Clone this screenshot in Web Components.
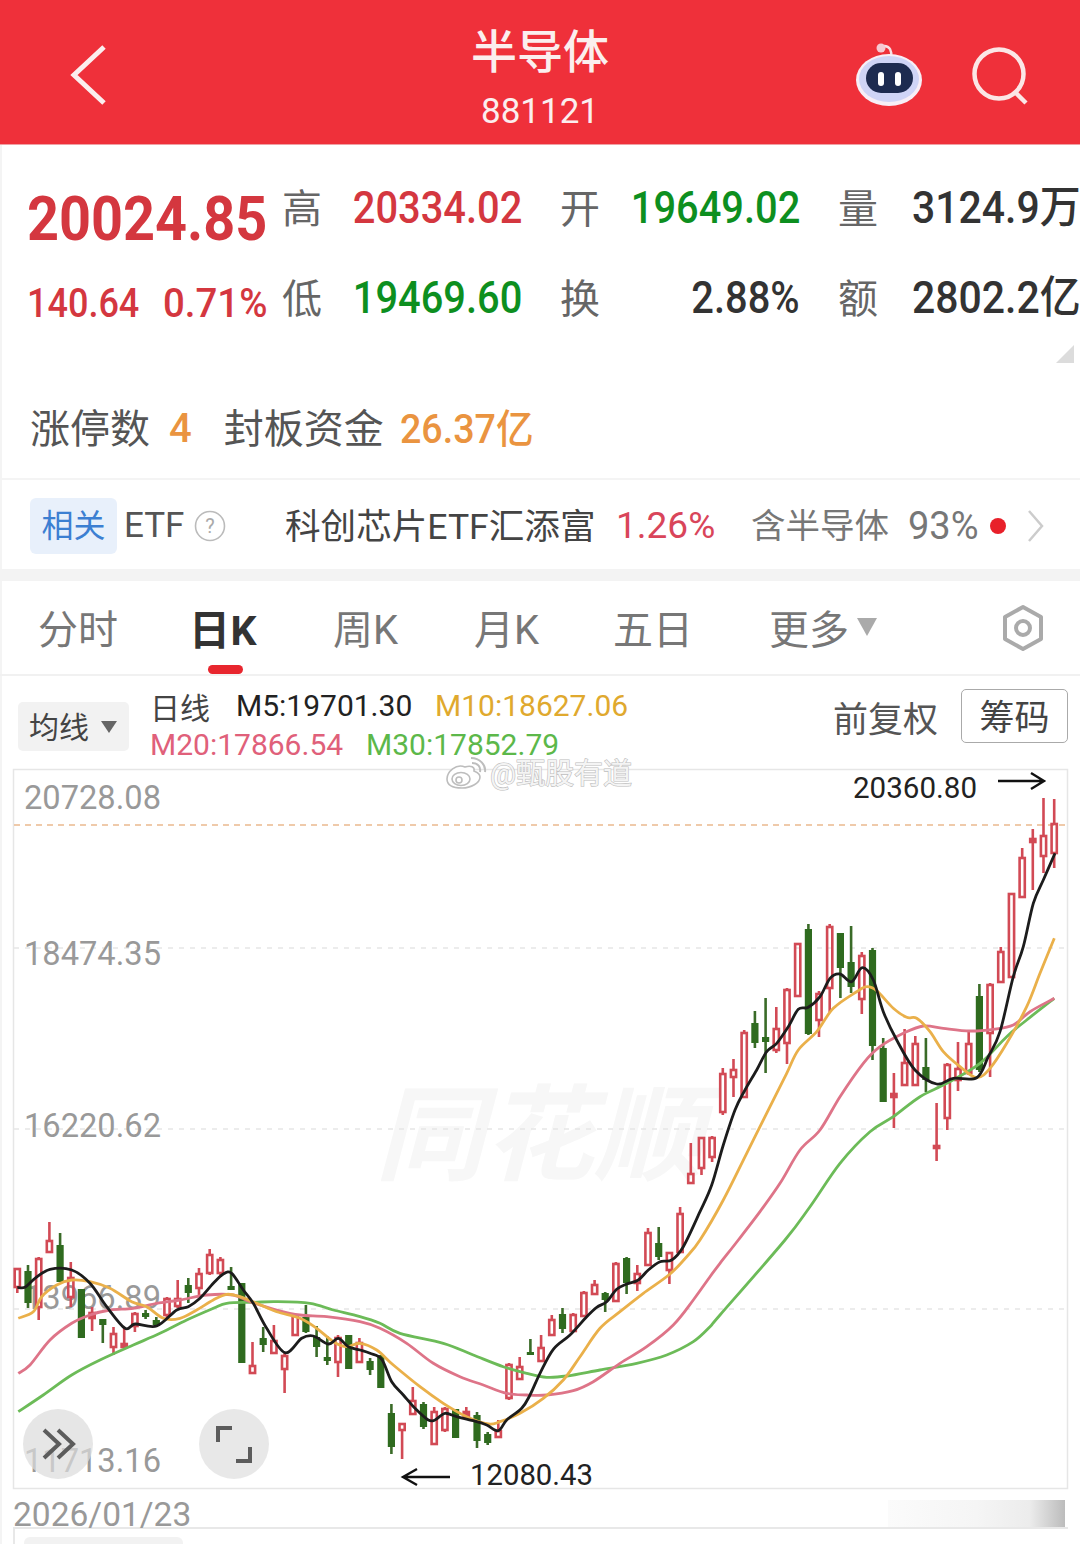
<!DOCTYPE html>
<html lang="zh">
<head>
<meta charset="utf-8">
<title>半导体</title>
<style>
    html, body { margin: 0; background: #fff; }
    body { width: 1080px; height: 1544px; overflow: hidden; font-family: Roboto, "Noto Sans CJK SC", sans-serif; box-shadow: inset 2px 0 #f4f4f4; }
</style>
</head>
<body>
<app-header></app-header>
<quote-stats></quote-stats>
<limit-row></limit-row>
<etf-row></etf-row>
<tab-bar></tab-bar>
<ma-legend></ma-legend>
<kline-chart></kline-chart>
<chart-footer></chart-footer>

<script>
const CJK = `Roboto, "Noto Sans CJK SC", sans-serif`;

class AppHeader extends HTMLElement {
    constructor() {
        super();
        this.attachShadow({ mode: 'open' });
        this.shadowRoot.innerHTML = `
            <style>
                :host {
                    display: grid;
                    grid-template-columns: 1fr auto 1fr;
                    align-items: center;
                    height: 145px;
                    background: #ef303a;
                    color: #fff;
                    font-family: ${CJK};
                    box-sizing: border-box;
                    border-bottom: 1px solid #f0a0a4;
                }
                .back { display: block; margin-left: 70px; width: 38px; height: 62px; margin-top: 6px; }
                .title { display: flex; flex-direction: column; align-items: center; }
                .name { font-size: 46px; font-weight: 500; line-height: 52px; margin-top: 14px; color: #fbeeee; }
                .code { font-size: 35px; line-height: 40px; margin-top: 14px; color: #fbeeee; }
                .tools { display: flex; justify-content: flex-end; align-items: center; }
                .robot { width: 72px; height: 66px; margin-right: 46px; margin-top: 2px; }
                .search { width: 60px; height: 60px; margin-right: 49px; margin-top: 10px; }
            </style>
            <svg class="back" viewBox="0 0 38 62"><path d="M34 3 L4 31 L34 59" fill="none" stroke="#fbeeee" stroke-width="5"/></svg>
            <div class="title">
                <div class="name">半导体</div>
                <div class="code">881121</div>
            </div>
            <div class="tools">
                <svg class="robot" viewBox="0 0 72 66">
                    <path d="M31 6 C37 6 39 11 38 17" fill="none" stroke="#f8dfe4" stroke-width="2.5"/>
                    <circle cx="28" cy="8" r="4.5" fill="#f6c9d2"/>
                    <ellipse cx="36" cy="40" rx="33" ry="26" fill="#f7eef6"/>
                    <ellipse cx="36" cy="39" rx="30" ry="23" fill="#cfd4f6"/>
                    <rect x="13" y="23" width="47" height="30" rx="15" fill="#1d2b50"/>
                    <rect x="25" y="32" width="6" height="14" rx="3" fill="#fff"/>
                    <rect x="42" y="32" width="6" height="14" rx="3" fill="#fff"/>
                </svg>
                <svg class="search" viewBox="0 0 60 60">
                    <circle cx="28" cy="27" r="24.5" fill="none" stroke="#fbe6e6" stroke-width="4.5"/>
                    <path d="M44 45 L55 56" stroke="#fbe6e6" stroke-width="4.5" fill="none"/>
                </svg>
            </div>
        `;
    }
}

class QuoteStats extends HTMLElement {
    constructor() {
        super();
        this.attachShadow({ mode: 'open' });
        this.shadowRoot.innerHTML = `
            <style>
                :host {
                    display: block;
                    position: relative;
                    height: 225px;
                    box-sizing: border-box;
                    padding: 18px 0 0 27px;
                    font-family: ${CJK};
                }
                .grid {
                    display: grid;
                    grid-template-columns: 255px 72px 206px 74px 204px 74px 168px;
                    grid-auto-rows: 90px;
                    align-items: center;
                    white-space: nowrap;
                }
                .lb { font-size: 40px; color: #666; margin-top: -5px; }
                .v { font-size: 44px; font-weight: 500; display: block; line-height: 50px; }
                .l { transform: scaleX(.93); transform-origin: left center; }
                .r { justify-self: end; transform: scaleX(.905); transform-origin: right center; margin-right: 38px; }
                .red { color: #d4373f; }
                .green { color: #0d8f1f; }
                .dark { color: #333; }
                .price { font-size: 62px; font-weight: 700; color: #d4373f; padding-top: 22px; line-height: 60px; transform: scaleX(.9); transform-origin: left center; display: block; }
                .sub { display: flex; gap: 25px; padding-top: 10px; font-size: 40px; font-weight: 500; color: #d4373f; }
                .sub span { display: block; transform: scaleX(.9); transform-origin: left center; width: 111px; }
                .sub span + span { transform: scaleX(.96); }
                .corner {
                    position: absolute;
                    right: 6px;
                    bottom: 7px;
                    width: 0;
                    height: 0;
                    border-left: 18px solid transparent;
                    border-bottom: 18px solid #dcdcdc;
                }
            </style>
            <div class="grid">
                <div class="price">20024.85</div>
                <div class="lb">高</div>
                <div class="v r red">20334.02</div>
                <div class="lb">开</div>
                <div class="v r green">19649.02</div>
                <div class="lb">量</div>
                <div class="v l dark">3124.9万</div>

                <div class="sub"><span>140.64</span><span>0.71%</span></div>
                <div class="lb">低</div>
                <div class="v r green">19469.60</div>
                <div class="lb">换</div>
                <div class="v r dark">2.88%</div>
                <div class="lb">额</div>
                <div class="v l dark">2802.2亿</div>
            </div>
            <div class="corner"></div>
        `;
    }
}

class LimitRow extends HTMLElement {
    constructor() {
        super();
        this.attachShadow({ mode: 'open' });
        this.shadowRoot.innerHTML = `
            <style>
                :host {
                    display: flex;
                    align-items: center;
                    height: 110px;
                    box-sizing: border-box;
                    padding: 3px 0 0 30px;
                    font-family: ${CJK};
                    font-size: 40px;
                    color: #555;
                    border-bottom: 2px solid #f4f4f4;
                }
                .o { color: #ea9440; font-weight: 500; }
                .four { margin: 5px 32px 0 19px; }
                .cap { margin-left: 16px; display: inline-block; transform: scaleX(.94); transform-origin: left center; white-space: nowrap; }
            </style>
            <span>涨停数</span>
            <span class="o four">4</span>
            <span>封板资金</span>
            <span class="o cap">26.37亿</span>
        `;
    }
}

class EtfRow extends HTMLElement {
    constructor() {
        super();
        this.attachShadow({ mode: 'open' });
        this.shadowRoot.innerHTML = `
            <style>
                :host {
                    display: flex;
                    align-items: center;
                    height: 101px;
                    box-sizing: border-box;
                    padding: 2px 0 0 30px;
                    font-family: ${CJK};
                    font-size: 34px;
                    color: #555;
                    white-space: nowrap;
                    border-bottom: 12px solid #f3f3f3;
                }
                .tag {
                    width: 87px;
                    height: 56px;
                    box-sizing: border-box;
                    padding-bottom: 5px;
                    border-radius: 6px;
                    background: #e8f0fb;
                    color: #3c7fd2;
                    font-size: 32px;
                    display: flex;
                    align-items: center;
                    justify-content: center;
                }
                .etf { margin-left: 7px; width: 70px; font-size: 35px; }
                .help { width: 32px; height: 32px; margin-right: 59px; }
                .name { color: #444; width: 331px; font-size: 35.6px; margin-top: -5px; }
                .pct { color: #d9455a; width: 135px; font-size: 37px; }
                .hold { color: #777; width: 157px; font-size: 34.5px; margin-top: -5px; }
                .share { color: #777; width: 82px; font-size: 38px; }
                .dot { width: 16px; height: 16px; border-radius: 50%; background: #e8202a; margin-right: 21px; }
                .chev { width: 18px; height: 34px; }
            </style>
            <div class="tag">相关</div>
            <div class="etf">ETF</div>
            <svg class="help" viewBox="0 0 32 32">
                <circle cx="16" cy="16" r="14.5" fill="none" stroke="#bbb" stroke-width="1.6"/>
                <text x="16" y="23" text-anchor="middle" font-size="20" fill="#aaa" font-family="Roboto, sans-serif">?</text>
            </svg>
            <div class="name">科创芯片ETF汇添富</div>
            <div class="pct">1.26%</div>
            <div class="hold">含半导体</div>
            <div class="share">93%</div>
            <div class="dot"></div>
            <svg class="chev" viewBox="0 0 18 34"><path d="M2 2 L15 17 L2 32" fill="none" stroke="#ccc" stroke-width="2.5"/></svg>
        `;
    }
}

class TabBar extends HTMLElement {
    constructor() {
        super();
        this.attachShadow({ mode: 'open' });
        this.shadowRoot.innerHTML = `
            <style>
                :host {
                    display: block;
                    position: relative;
                    height: 95px;
                    box-sizing: border-box;
                    border-bottom: 2px solid #f1f1f1;
                    font-family: ${CJK};
                }
                .tabs {
                    display: grid;
                    grid-template-columns: 155px 140px 141px 139px 156px 233px 43px;
                    align-items: center;
                    height: 93px;
                    padding-left: 38px;
                    font-size: 40px;
                    color: #777;
                    white-space: nowrap;
                }
                .tabs > div { margin-top: -2px; }
                .tabs > .on { color: #333; font-weight: 700; font-size: 41px; margin-left: -4px; letter-spacing: .5px; }
                .more { display: flex; align-items: center; gap: 8px; }
                .more i { width: 0; height: 0; border-left: 10px solid transparent; border-right: 10px solid transparent; border-top: 18px solid #aaa; }
                .gear { width: 44px; height: 48px; margin-left: -1px; margin-top: 0; }
                .bar {
                    position: absolute;
                    left: 208px;
                    bottom: 0;
                    width: 35px;
                    height: 9px;
                    border-radius: 5px;
                    background: #e8262e;
                }
            </style>
            <div class="tabs">
                <div>分时</div>
                <div class="on">日K</div>
                <div>周K</div>
                <div>月K</div>
                <div>五日</div>
                <div class="more">更多<i></i></div>
                <svg class="gear" viewBox="0 0 44 48">
                    <path d="M22 3 L40 13 L40 35 L22 45 L4 35 L4 13 Z" fill="none" stroke="#aaa" stroke-width="4" stroke-linejoin="round"/>
                    <circle cx="22" cy="24" r="7" fill="none" stroke="#aaa" stroke-width="4"/>
                </svg>
            </div>
            <div class="bar"></div>
        `;
    }
}

class MaLegend extends HTMLElement {
    constructor() {
        super();
        this.attachShadow({ mode: 'open' });
        this.shadowRoot.innerHTML = `
            <style>
                :host {
                    display: flex;
                    height: 93px;
                    box-sizing: border-box;
                    padding: 13px 12px 0 18px;
                    font-family: ${CJK};
                    white-space: nowrap;
                }
                .pill {
                    width: 111px;
                    height: 49px;
                    margin-top: 13px;
                    border-radius: 5px;
                    background: #f2f2f2;
                    display: flex;
                    align-items: center;
                    padding: 0 0 3px 11px;
                    box-sizing: border-box;
                    font-size: 30px;
                    color: #444;
                }
                .pill i { margin: 3px 0 0 12px; width: 0; height: 0; border-left: 8px solid transparent; border-right: 8px solid transparent; border-top: 12px solid #666; }
                .ma { margin-left: 21px; margin-top: -3px; display: flex; flex-direction: column; }
                .row { display: flex; height: 39px; align-items: center; font-size: 30px; }
                .row span { display: block; }
                .t { color: #444; width: 86px; }
                .m5 { color: #222; width: 199px; }
                .m10 { color: #e0a92e; }
                .m20 { color: #e0607a; width: 216px; }
                .m30 { color: #5cb84a; }
                .right { margin-left: auto; display: flex; align-items: flex-start; }
                .fq { font-size: 35px; color: #555; margin: 12px 23px 0 0; line-height: 40px; }
                .chip {
                    width: 107px;
                    height: 54px;
                    box-sizing: border-box;
                    padding-bottom: 4px;
                    border: 1px solid #aaa;
                    border-radius: 5px;
                    font-size: 35px;
                    color: #444;
                    display: flex;
                    align-items: center;
                    justify-content: center;
                }
            </style>
            <div class="pill">均线<i></i></div>
            <div class="ma">
                <div class="row"><span class="t">日线</span><span class="m5">M5:19701.30</span><span class="m10">M10:18627.06</span></div>
                <div class="row"><span class="m20">M20:17866.54</span><span class="m30">M30:17852.79</span></div>
            </div>
            <div class="right">
                <div class="fq">前复权</div>
                <div class="chip">筹码</div>
            </div>
        `;
    }
}

// [wick top, body top, body bottom, wick bottom], in page px; last flag: g = green
const CANDLES = [
    [1268,1268,1287,1293],[1265,1271,1303,1308,'g'],[1257,1258,1307,1320],[1222,1240,1252,1252],[1233,1245,1282,1282,'g'],
    [1262,1277,1297,1307],[1289,1289,1338,1338,'g'],[1307,1312,1318,1331],[1319,1319,1325,1343,'g'],[1327,1333,1347,1355],
    [1328,1343,1347,1348],[1312,1313,1326,1332],[1310,1313,1317,1319,'g'],[1317,1320,1325,1326,'g'],[1297,1298,1315,1318],
    [1280,1298,1306,1308],[1278,1285,1293,1303,'g'],[1268,1273,1288,1295],[1249,1254,1273,1275],[1257,1259,1273,1275],
    [1267,1286,1290,1290,'g'],[1283,1283,1363,1363,'g'],[1342,1365,1373,1373],[1327,1338,1345,1352,'g'],[1325,1340,1353,1353],
    [1353,1355,1369,1393],[1315,1315,1335,1335],[1305,1317,1332,1333,'g'],[1326,1337,1347,1357,'g'],[1336,1357,1361,1365,'g'],
    [1335,1337,1362,1377],[1335,1335,1369,1369,'g'],[1338,1342,1362,1363],[1358,1361,1370,1375,'g'],[1355,1355,1388,1388,'g'],
    [1404,1413,1447,1454,'g'],[1423,1423,1430,1459],[1387,1400,1414,1415],[1402,1404,1427,1429,'g'],[1407,1411,1444,1445],
    [1407,1408,1430,1432],[1409,1409,1438,1438,'g'],[1407,1411,1417,1420],[1412,1415,1441,1448,'g'],[1432,1434,1443,1445,'g'],
    [1420,1430,1437,1438],[1363,1364,1398,1400],[1357,1366,1379,1380],[1339,1352,1353,1353,'g'],[1335,1347,1361,1362],
    [1315,1319,1335,1335],[1308,1314,1329,1333,'g'],[1313,1314,1331,1332],[1291,1292,1316,1317],[1280,1284,1294,1295],
    [1292,1293,1300,1312,'g'],[1262,1263,1301,1302],[1257,1258,1283,1294,'g'],[1265,1273,1283,1291],[1228,1232,1265,1265],
    [1227,1243,1257,1260,'g'],[1252,1252,1270,1284],[1207,1213,1252,1253],[1143,1173,1183,1183],[1137,1137,1168,1175],
    [1136,1137,1157,1162],[1068,1073,1112,1115],[1059,1069,1077,1097],[1030,1032,1097,1097],[1011,1023,1043,1048,'g'],
    [998,1037,1042,1073,'g'],[1007,1028,1050,1053],[988,989,1043,1064],[943,943,996,996],[924,929,1034,1035,'g'],
    [991,993,1020,1037],[924,926,988,1012],[933,933,968,998,'g'],[926,962,987,993,'g'],[952,955,999,1014],
    [948,950,1046,1060,'g'],[1038,1048,1102,1102,'g'],[1073,1093,1097,1128],[1029,1062,1085,1086],[1036,1043,1085,1086],
    [1038,1067,1080,1092,'g'],[1103,1145,1148,1161],[1063,1064,1118,1130],[1042,1068,1080,1091],[1032,1043,1073,1075],
    [984,996,1070,1072,'g'],[983,984,1033,1077],[947,951,982,982],[893,893,977,977],[848,857,897,897],
    [829,838,842,890],[798,835,856,873],[799,823,853,868]
];

// moving averages traced from the reference, as [x, y] in crops of 3x scale
const crop = (ox, oy, pts) => pts.map(([x, y]) => [ox + x / 3, oy + y / 3]);
const MA = {
    m5: { color: '#1c1c1c', pts: [
        ...crop(0,1200,[[52,262],[75,262],[105,235],[150,208],[215,210],[270,250],[320,320],[375,385],[405,372],[470,378],[530,330],[565,320],[600,295],[640,250],[670,222],[695,220],[730,270],[760,310],[800,385],[855,458],[905,415],[940,408],[985,432],[1015,415],[1045,440]]),
        ...crop(360,1200,[[0,450],[30,460],[65,478],[95,545],[130,585],[165,625],[205,660],[225,660],[255,640],[290,650],[340,662],[380,675],[415,692],[440,660],[485,625],[510,585],[540,520],[580,448],[630,405],[680,350],[710,322],[740,305],[770,268],[800,252],[835,240],[865,210],[900,185],[935,180],[970,140]]),
        ...crop(660,900,[[120,935],[155,855],[190,735],[225,630],[255,570],[290,510],[320,455],[350,430],[385,380],[415,328],[445,322],[480,290],[510,235],[540,222],[575,245],[607,203],[640,240],[670,335],[710,420],[765,510],[830,552],[880,535],[950,533],[985,470],[1020,395]]),
        ...crop(960,760,[[160,650],[190,560],[220,430],[250,360],[285,280]])
    ]},
    m10: { color: '#eab04a', pts: [
        ...crop(0,1200,[[55,355],[100,335],[125,290],[170,255],[215,240],[270,245],[330,265],[395,305],[440,320],[490,355],[540,355],[590,330],[640,300],[680,283],[720,290],[770,310],[830,335],[900,355],[950,385],[1000,425],[1040,440]]),
        ...crop(360,1200,[[0,430],[50,450],[100,495],[180,560],[250,610],[320,650],[385,672],[420,665],[480,640],[550,595],[610,540],[660,470],[720,385],[780,335],[850,280],[930,222],[980,170]]),
        ...crop(660,900,[[120,1020],[190,900],[260,760],[330,620],[380,520],[415,450],[470,395],[520,325],[590,275],[620,260],[650,272],[700,325],[740,352],[770,355],[810,395],[850,455],[900,500],[950,533],[990,505],[1040,430],[1100,320],[1140,220],[1183,115]])
    ]},
    m20: { color: '#de7488', pts: [
        ...crop(0,1200,[[55,520],[90,495],[150,420],[215,370],[270,345],[330,330],[400,325],[470,310],[540,300],[620,285],[700,285],[750,305],[830,330],[900,345],[980,350]]),
        ...crop(360,1200,[[0,365],[60,385],[140,430],[220,490],[300,530],[370,555],[440,580],[500,585],[560,585],[640,572],[700,545],[780,490],[860,440],[940,375],[1000,300],[1050,230],[1080,190]]),
        ...crop(660,900,[[235,1020],[300,935],[360,850],[420,750],[480,690],[540,590],[610,490],[660,440],[730,400],[790,378],[850,385],[930,393],[1000,388],[1060,375],[1110,335],[1183,295]])
    ]},
    m30: { color: '#6cbb58', pts: [
        ...crop(0,1200,[[55,635],[130,585],[215,525],[300,480],[400,435],[480,400],[560,360],[640,325],[680,310],[760,307],[830,305],[930,310],[1000,330]]),
        ...crop(360,1200,[[0,350],[60,370],[120,400],[250,430],[340,465],[430,500],[500,520],[560,532],[620,528],[720,510],[830,490],[920,465],[1000,425],[1050,380],[1080,345]]),
        ...crop(660,900,[[375,1020],[450,920],[540,790],[630,695],[700,650],[780,590],[860,550],[960,490],[1040,410],[1100,360],[1183,295]])
    ]}
};

// catmull-rom through the traced points, so the averages don't look faceted
function smoothPath(pts) {
    let d = `M${pts[0][0].toFixed(1)} ${pts[0][1].toFixed(1)}`;
    for (let i = 0; i < pts.length - 1; i++) {
        const p0 = pts[i - 1] || pts[i], p1 = pts[i], p2 = pts[i + 1], p3 = pts[i + 2] || p2;
        const c1x = p1[0] + (p2[0] - p0[0]) / 6, c1y = p1[1] + (p2[1] - p0[1]) / 6;
        const c2x = p2[0] - (p3[0] - p1[0]) / 6, c2y = p2[1] - (p3[1] - p1[1]) / 6;
        d += `C${c1x.toFixed(1)} ${c1y.toFixed(1)} ${c2x.toFixed(1)} ${c2y.toFixed(1)} ${p2[0].toFixed(1)} ${p2[1].toFixed(1)}`;
    }
    return d;
}

class KlineChart extends HTMLElement {
    constructor() {
        super();
        this.attachShadow({ mode: 'open' });
        const candles = CANDLES.map((c, i) => {
            const x = +(17.3 + 10.69 * i).toFixed(1);
            const [top, bodyTop, bodyBottom, bottom, kind] = c;
            if (kind === 'g') {
                const h = Math.max(bodyBottom - bodyTop, 3);
                return `<path d="M${x} ${top}V${bottom}" stroke="#3a6b28" stroke-width="2.6"/>
                    <rect x="${x - 3.6}" y="${bodyTop}" width="7.2" height="${h}" fill="#2f6b1f"/>`;
            }
            const h = Math.max(bodyBottom - bodyTop, 2);
            return `<path d="M${x} ${top}V${bodyTop}M${x} ${bodyBottom}V${bottom}" stroke="#d24a55" stroke-width="2.6"/>
                <rect x="${x - 2.6}" y="${bodyTop + 1}" width="5.2" height="${h - 1}" fill="${h < 7 ? '#d24a55' : 'none'}" stroke="#d24a55" stroke-width="2.6"/>`;
        }).join('');
        const lines = ['m30', 'm20', 'm10', 'm5'].map(k =>
            `<path d="${smoothPath(MA[k].pts)}" fill="none" stroke="${MA[k].color}" stroke-width="2.8" stroke-linejoin="round"/>`
        ).join('');
        this.shadowRoot.innerHTML = `
            <style>
                :host { display: block; height: 721px; font-family: ${CJK}; }
                svg { display: block; overflow: visible; }
                .y { font-size: 33px; fill: #999; font-family: Roboto, sans-serif; }
                .ext { font-size: 29px; fill: #222; font-family: Roboto, sans-serif; }
                .wm { font-size: 104px; font-style: italic; font-weight: 700; fill: #f7f7f7; }
                .wb { font-size: 29px; fill: #f4f4f4; stroke: #bdbdbd; stroke-width: 1.2px; paint-order: stroke; }
            </style>
            <svg width="1080" height="721" viewBox="0 769 1080 721">
                <rect x="13.5" y="769.5" width="1054" height="719" fill="none" stroke="#e6e6e6" stroke-width="1.5"/>
                <text class="wm" x="375" y="1172" textLength="328" lengthAdjust="spacingAndGlyphs">同花顺</text>
                <path d="M14 825H1066" stroke="#eab98f" stroke-width="1.4" stroke-dasharray="6 5"/>
                <path d="M14 948H1066M14 1129H1066M14 1309H1066" stroke="#e6e6e6" stroke-width="1.4" stroke-dasharray="5 6"/>
                <text class="y" x="24" y="809" textLength="137" lengthAdjust="spacingAndGlyphs">20728.08</text>
                <text class="y" x="24" y="965" textLength="137" lengthAdjust="spacingAndGlyphs">18474.35</text>
                <text class="y" x="24" y="1137" textLength="137" lengthAdjust="spacingAndGlyphs">16220.62</text>
                <text class="y" x="24" y="1309" textLength="137" lengthAdjust="spacingAndGlyphs">13966.89</text>
                <text class="y" x="24" y="1472" textLength="137" lengthAdjust="spacingAndGlyphs">11713.16</text>
                ${candles}
                ${lines}
                <text class="ext" x="853" y="798" textLength="124" lengthAdjust="spacingAndGlyphs">20360.80</text>
                <path d="M998 781H1043M1031 773L1044 781L1031 789" fill="none" stroke="#111" stroke-width="2.4"/>
                <text class="ext" x="470" y="1485" textLength="123" lengthAdjust="spacingAndGlyphs">12080.43</text>
                <path d="M450 1477H404M417 1469L403 1477L417 1485" fill="none" stroke="#111" stroke-width="2.4"/>
                <circle cx="58" cy="1444" r="35" fill="#dcdcdc" fill-opacity=".7"/>
                <path d="M44 1430L59 1444L44 1458M58 1430L73 1444L58 1458" fill="none" stroke="#5c5c5c" stroke-width="4"/>
                <circle cx="234" cy="1444" r="35" fill="#e4e4e4" fill-opacity=".85"/>
                <path d="M218 1442V1428H232M250 1447V1461H236" fill="none" stroke="#5c5c5c" stroke-width="4"/>
                <g fill="#fff" stroke="#bdbdbd" stroke-width="1.6">
                    <path d="M465 767 C456 763 447 772 447 779 C447 786 455 788 462 788 C471 788 480 783 480 777 C480 773 476 772 474 771 C475 767 471 765 465 767 Z"/>
                    <ellipse cx="461" cy="779" rx="9" ry="6.5" fill="none"/>
                    <circle cx="459" cy="780" r="3" fill="none"/>
                    <path d="M472 763 C478 763 481 767 480 772M471 758 C480 758 486 765 485 772" fill="none" stroke-width="2"/>
                </g>
                <text class="wb" x="490" y="784">@甄股有道</text>
            </svg>
        `;
    }
}

class ChartFooter extends HTMLElement {
    constructor() {
        super();
        this.attachShadow({ mode: 'open' });
        this.shadowRoot.innerHTML = `
            <style>
                :host {
                    display: block;
                    position: relative;
                    height: 54px;
                    box-sizing: border-box;
                    padding: 6px 0 0 13px;
                    font-family: Roboto, sans-serif;
                }
                .date { font-size: 33.5px; line-height: 37px; height: 31px; color: #999; }
                .box { height: 17px; margin-right: 12px; border-top: 2px solid #e8e8e8; border-left: 2px solid #e8e8e8; box-sizing: border-box; padding: 8px 0 0 9px; }
                .pill { width: 159px; height: 9px; background: #f2f2f2; border-radius: 6px 6px 0 0; }
                .smudge {
                    position: absolute;
                    left: 888px;
                    top: 10px;
                    width: 177px;
                    height: 27px;
                    background: linear-gradient(90deg, #fbfbfb, #f5f5f5 50%, #ececec 80%, #bcbcbc);
                }
            </style>
            <div class="date">2026/01/23</div>
            <div class="box"><div class="pill"></div></div>
            <div class="smudge"></div>
        `;
    }
}

customElements.define('app-header', AppHeader);
customElements.define('quote-stats', QuoteStats);
customElements.define('limit-row', LimitRow);
customElements.define('etf-row', EtfRow);
customElements.define('tab-bar', TabBar);
customElements.define('ma-legend', MaLegend);
customElements.define('kline-chart', KlineChart);
customElements.define('chart-footer', ChartFooter);
</script>
</body>
</html>
